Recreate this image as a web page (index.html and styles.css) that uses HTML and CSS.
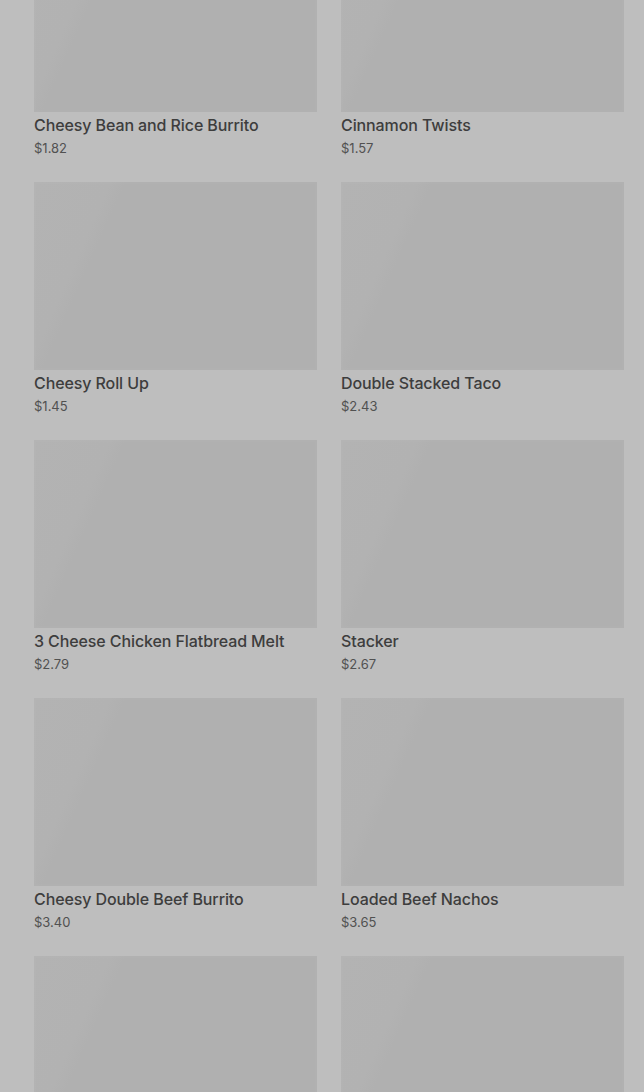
FILE: index.html
```html
<!DOCTYPE html>
<html lang="en">
<head>
    <meta charset="UTF-8">
    <meta name="viewport" content="width=device-width, initial-scale=1.0">
    <title>Menu</title>
    <link rel="stylesheet" href="styles.css">
</head>
<body>

<div class="menu-grid">
    <div class="item">
        <div class="thumb"></div>
        <h3 class="item-name">Cheesy Bean and Rice Burrito</h3>
        <p class="item-price">$1.82</p>
    </div>
    <div class="item">
        <div class="thumb"></div>
        <h3 class="item-name">Cinnamon Twists</h3>
        <p class="item-price">$1.57</p>
    </div>
    <div class="item">
        <div class="thumb"></div>
        <h3 class="item-name">Cheesy Roll Up</h3>
        <p class="item-price">$1.45</p>
    </div>
    <div class="item">
        <div class="thumb"></div>
        <h3 class="item-name">Double Stacked Taco</h3>
        <p class="item-price">$2.43</p>
    </div>
    <div class="item">
        <div class="thumb"></div>
        <h3 class="item-name">3 Cheese Chicken Flatbread Melt</h3>
        <p class="item-price">$2.79</p>
    </div>
    <div class="item">
        <div class="thumb"></div>
        <h3 class="item-name">Stacker</h3>
        <p class="item-price">$2.67</p>
    </div>
    <div class="item">
        <div class="thumb"></div>
        <h3 class="item-name">Cheesy Double Beef Burrito</h3>
        <p class="item-price">$3.40</p>
    </div>
    <div class="item">
        <div class="thumb"></div>
        <h3 class="item-name">Loaded Beef Nachos</h3>
        <p class="item-price">$3.65</p>
    </div>
    <div class="item">
        <div class="thumb"></div>
    </div>
    <div class="item">
        <div class="thumb"></div>
    </div>
</div>

</body>
</html>
```

FILE: styles.css
```css
html, body {
    height: 100%;
}

body {
    margin: 0;
    background-color: #bebebe;
    font-family: Inter, 'Noto Sans', Arial, sans-serif;
    overflow: hidden;
}

.menu-grid {
    display: grid;
    grid-template-columns: 283px 283px;
    column-gap: 24px;
    row-gap: 25px;
    padding: 0 20px 0 34px;
    margin-top: -76px; /* list is scrolled a little */
}

/* placeholder image while loading, with a faint shimmer wedge on the left */
.thumb {
    height: 188px;
    background: linear-gradient(114deg, #b3b3b3 0, #b2b2b2 70px, #b0b0b0 84px, #b0b0b0 100%);
    box-shadow: inset 0 0 0 2px rgba(255, 255, 255, 0.02);
}

.item-name {
    margin: 2px 0 0;
    font-size: 16px;
    font-weight: 500;
    line-height: 22px;
    color: #3d3d3d;
    letter-spacing: -0.1px;
}

.item-price {
    margin: 3px 0 0;
    font-size: 13px;
    line-height: 18px;
    color: #515151;
}
```
